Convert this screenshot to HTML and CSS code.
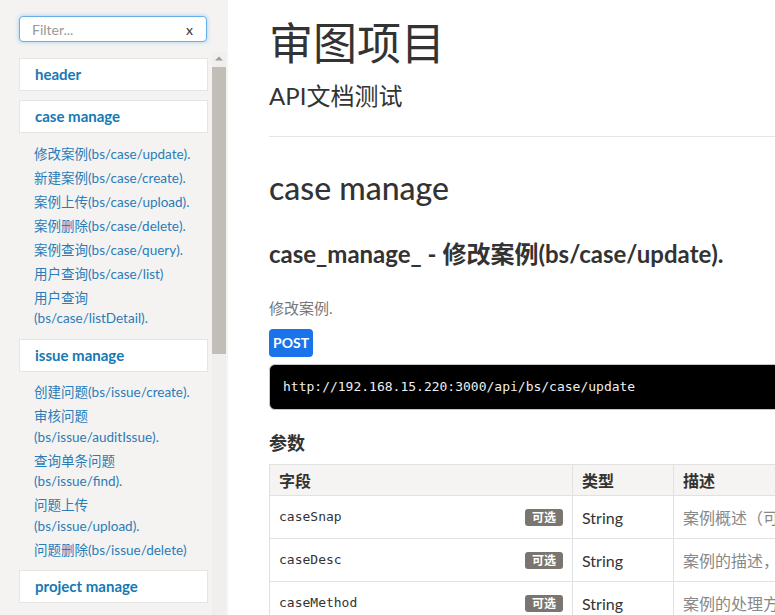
FILE: index.html
```html
<!DOCTYPE html>
<html lang="zh-CN">
<head>
<meta charset="utf-8">
<title>审图项目</title>
<link rel="stylesheet" href="styles.css">
</head>
<body>
<div class="page">
  <aside class="sidebar">
    <div class="filter">
      <input class="filter-input" type="text" placeholder="Filter...">
      <span class="filter-clear">x</span>
    </div>
    <div class="nav-wrap">
      <nav class="nav">
        <div class="nav-group">header</div>
        <div class="nav-group">case manage</div>
        <ul class="nav-list">
          <li>修改案例(bs/case/update).</li>
          <li>新建案例(bs/case/create).</li>
          <li>案例上传(bs/case/upload).</li>
          <li>案例删除(bs/case/delete).</li>
          <li>案例查询(bs/case/query).</li>
          <li>用户查询(bs/case/list)</li>
          <li>用户查询<br>(bs/case/listDetail).</li>
        </ul>
        <div class="nav-group">issue manage</div>
        <ul class="nav-list">
          <li>创建问题(bs/issue/create).</li>
          <li>审核问题<br>(bs/issue/auditIssue).</li>
          <li>查询单条问题<br>(bs/issue/find).</li>
          <li>问题上传<br>(bs/issue/upload).</li>
          <li>问题删除(bs/issue/delete)</li>
        </ul>
        <div class="nav-group">project manage</div>
      </nav>
      <div class="scrollbar">
        <div class="scroll-arrow">
          <svg width="14" height="14" viewBox="0 0 14 14"><polygon points="3,8.5 11,8.5 7,4.5" fill="#a19d97"/></svg>
        </div>
        <div class="scroll-thumb"></div>
      </div>
    </div>
  </aside>

  <main class="content">
    <h1 class="title">审图项目</h1>
    <p class="subtitle">API文档测试</p>
    <hr class="rule">

    <h2 class="section">case manage</h2>
    <h3 class="api-title">case_manage_ - 修改案例(bs/case/update).</h3>
    <p class="api-desc">修改案例.</p>
    <span class="method">POST</span>
    <pre class="endpoint">http://192.168.15.220:3000/api/bs/case/update</pre>

    <h4 class="params-title">参数</h4>
    <table class="params">
      <thead>
        <tr>
          <th class="col-field">字段</th>
          <th class="col-type">类型</th>
          <th class="col-desc">描述</th>
        </tr>
      </thead>
      <tbody>
        <tr>
          <td class="col-field"><div class="field"><code>caseSnap</code><span class="optional">可选</span></div></td>
          <td class="col-type">String</td>
          <td class="col-desc desc">案例概述（可选）</td>
        </tr>
        <tr>
          <td class="col-field"><div class="field"><code>caseDesc</code><span class="optional">可选</span></div></td>
          <td class="col-type">String</td>
          <td class="col-desc desc">案例的描述，可选</td>
        </tr>
        <tr>
          <td class="col-field"><div class="field"><code>caseMethod</code><span class="optional">可选</span></div></td>
          <td class="col-type">String</td>
          <td class="col-desc desc">案例的处理方法</td>
        </tr>
      </tbody>
    </table>
  </main>
</div>
</body>
</html>
```

FILE: styles.css
```css
html, body {
  margin: 0;
  padding: 0;
  height: 100%;
  overflow: hidden;
  background: #ffffff;
  font-family: "Lato", "Noto Sans CJK SC", sans-serif;
  color: #333333;
}

.page {
  display: flex;
  height: 615px;
  width: 1100px;
}

/* ---------- sidebar ---------- */
.sidebar {
  flex: 0 0 228px;
  width: 228px;
  background: #f4f3f1;
  display: flex;
  flex-direction: column;
  height: 615px;
}

.filter {
  margin: 16px 0 0 19px;
  height: 24px;
  border: 1px solid #66afe9;
  border-radius: 4px;
  background: #ffffff;
  box-shadow: 0 0 4px rgba(102, 175, 233, 0.6);
  display: flex;
  align-items: center;
  padding: 0 0 0 12px;
  box-sizing: content-box;
  width: 174px;
}

.filter-input {
  flex: 1;
  min-width: 0;
  border: none;
  outline: none;
  padding: 0;
  font-family: "Lato", "Noto Sans CJK SC", sans-serif;
  font-size: 14px;
  color: #333;
  background: transparent;
}

.filter-input::placeholder {
  color: #999999;
}

.filter-clear {
  font-family: "Lato", sans-serif;
  font-size: 14px;
  color: #333333;
  width: 20px;
  text-align: left;
}

.nav-wrap {
  margin-top: 10px;
  flex: 1;
  display: flex;
  min-height: 0;
}

.nav {
  width: 212px;
  flex: 0 0 212px;
  overflow: hidden;
  padding-top: 6px;
  box-sizing: border-box;
}

.scrollbar {
  flex: 0 0 14px;
  width: 14px;
  background: #f0efed;
  display: flex;
  flex-direction: column;
}

.scroll-arrow {
  height: 14px;
  display: flex;
}

.scroll-thumb {
  margin-top: 1px;
  height: 287px;
  background: #c1beb8;
}

.nav-group {
  margin: 0 0 9px 19px;
  height: 31px;
  background: #ffffff;
  border: 1px solid #e5e5e5;
  padding-left: 15px;
  box-sizing: content-box;
  width: 172px;
  font-size: 15px;
  font-weight: 700;
  color: #1479b4;
  line-height: 31px;
}

.nav-list {
  list-style: none;
  margin: 0 0 8px 0;
  padding: 0 0 0 34px;
}

.nav-list li {
  font-size: 13.5px;
  line-height: 20.5px;
  padding: 1.75px 0;
  color: #2a7cb8;
  white-space: nowrap;
}

/* ---------- content ---------- */
.content {
  flex: 0 0 auto;
  width: 760px;
  padding: 19px 0 0 41px;
}

.title {
  margin: 0;
  font-size: 44px;
  line-height: 48px;
  font-weight: 400;
  color: #333333;
}

.subtitle {
  margin: 14px 0 0 0;
  font-size: 24px;
  line-height: 30px;
  color: #333333;
}

.rule {
  margin: 25px 0 0 0;
  border: none;
  border-top: 1px solid #e5e5e5;
  height: 0;
}

.section {
  margin: 31px 0 0 0;
  font-size: 32px;
  line-height: 40px;
  font-weight: 500;
  color: #333333;
}

.api-title {
  margin: 30px 0 0 0;
  font-size: 24px;
  line-height: 32px;
  font-weight: 700;
  color: #333333;
}

.api-desc {
  margin: 28px 0 0 0;
  font-size: 15px;
  line-height: 20px;
  color: #777777;
}

.method {
  display: inline-block;
  margin-top: 11px;
  height: 28px;
  line-height: 28px;
  padding: 0 4px;
  border-radius: 4px;
  background: #1a73e8;
  color: #ffffff;
  font-size: 14px;
  font-weight: 700;
}

.endpoint {
  margin: 7px 0 0 0;
  height: 44px;
  line-height: 44px;
  padding: 0 13px;
  background: #000000;
  border: 1px solid #c8c8c8;
  border-radius: 6px;
  color: #eeeeee;
  font-family: "DejaVu Sans Mono", monospace;
  font-size: 13px;
}

.params-title {
  margin: 21px 0 0 0;
  font-size: 18px;
  line-height: 24px;
  font-weight: 700;
  color: #333333;
}

.params {
  margin-top: 9px;
  width: 100%;
  border-collapse: collapse;
  table-layout: fixed;
}

.params th,
.params td {
  border: 1px solid #e1e1e1;
  padding: 0 9px 0 9px;
  text-align: left;
  vertical-align: middle;
}

.params th {
  height: 30px;
  background: #f5f4f2;
  font-size: 16px;
  font-weight: 700;
  color: #333333;
}

.params td {
  height: 42px;
  font-size: 16px;
  color: #333333;
}

.col-field { width: 284px; }
.col-type { width: 82px; }

.field {
  display: flex;
  align-items: center;
  justify-content: space-between;
}

.field code {
  font-family: "DejaVu Sans Mono", monospace;
  font-size: 13px;
  color: #333333;
  margin-top: -2px;
}

.optional {
  display: inline-block;
  width: 38px;
  height: 17px;
  line-height: 17px;
  margin-top: 1px;
  text-align: center;
  border-radius: 3px;
  background: #7b756f;
  color: #ffffff;
  font-size: 12px;
  font-weight: 700;
}

.params td.desc {
  color: #888888;
  white-space: nowrap;
  overflow: hidden;
}
```
